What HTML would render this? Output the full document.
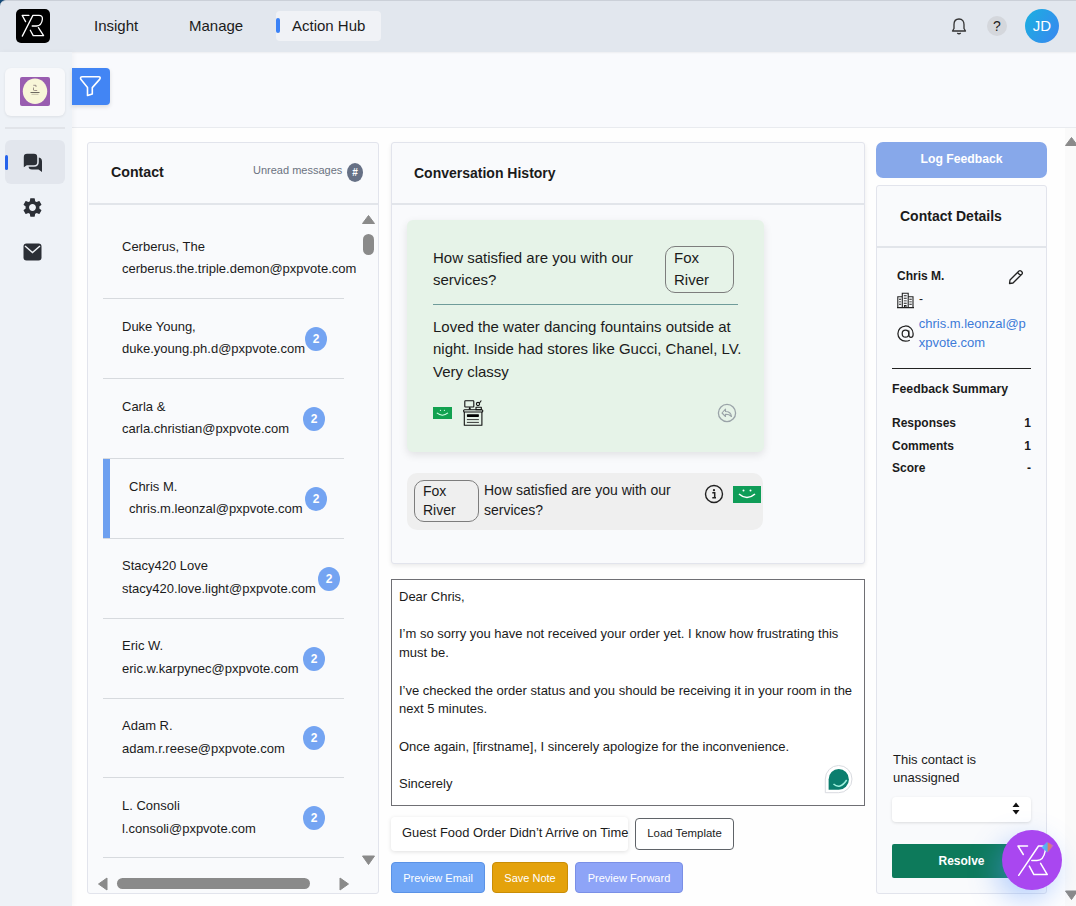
<!DOCTYPE html>
<html><head><meta charset="utf-8">
<style>
*{box-sizing:border-box;margin:0;padding:0}
html,body{width:1076px;height:906px;overflow:hidden}
body{position:relative;background:#f9fafd;font-family:"Liberation Sans",sans-serif;color:#1b1b1b}
.a{position:absolute}
.hdr{left:0;top:0;width:1076px;height:52px;background:#e3e7ee;border-top:1px solid #cdd2d9}
.corner{left:0;top:0;width:10px;height:10px;background:#174b78}
.hdrbg{left:0;top:0;width:1076px;height:52px;background:#e2e7ee;box-shadow:0 1px 2px rgba(0,0,0,.05);border-top-left-radius:6px;border-top:1px solid #cbd0d8}
.nav{font-size:15px;color:#1b1b1b;white-space:nowrap}
.side{left:0;top:52px;width:72px;height:854px;background:#eef2f7;box-shadow:2px 0 5px rgba(0,0,0,.035)}
.main{left:72px;top:127px;width:1004px;height:779px;background:#fefefe;border-top:1px solid #e9ebef}
.card{background:#f9fafc;border:1px solid #e2e4ec;border-radius:3px}
.cardhdr{border-bottom:2px solid #e2e5ea}
.bold{font-weight:700}
.t13{font-size:13px}
.sep{height:1px;background:#d7dade}
.badge{width:22px;height:24px;border-radius:50%;background:#74a4f2;color:#fff;font-weight:700;font-size:12px;text-align:center;line-height:24px}
.item{left:122px;width:240px;white-space:nowrap;font-size:13px;color:#222}
.citem{display:flex;align-items:center;height:80px;font-size:13px;color:#222;white-space:nowrap}
.ctext{line-height:22.6px;font-size:13px;color:#1b1b1b;white-space:nowrap}
.ctext div{height:22.6px}
.btn{color:#fff;font-size:11px;text-align:center;border-radius:4px;padding-top:1px}
</style></head><body>
<!-- header -->
<div class="a corner"></div>
<div class="a hdrbg"></div>
<div class="a" style="left:16px;top:9px;width:34px;height:34px;background:#000;border-radius:5px">
  <svg width="34" height="34" viewBox="0 0 34 34"><g fill="none" stroke="#fff" stroke-width="1.3" stroke-linejoin="round" stroke-linecap="round"><path d="M12.9 6.4 H6.2 L9.6 12.6"/><path d="M6.3 27.1 L16.9 6.4 H23 Q26.8 6.4 26.4 10.2 Q25.6 16.8 20.5 17 H16.2"/><path d="M14.3 21.2 L17.2 26.6 H27.6 L22.4 18.6"/></g></svg>
</div>
<div class="a nav" style="left:94px;top:17px">Insight</div>
<div class="a nav" style="left:189px;top:17px">Manage</div>
<div class="a" style="left:276px;top:11px;width:105px;height:30px;background:#f0f2f6;border-radius:4px"></div>
<div class="a" style="left:276px;top:18px;width:4px;height:15px;background:#3b82f6;border-radius:2px"></div>
<div class="a nav" style="left:292px;top:17px">Action Hub</div>
<!-- bell -->
<svg class="a" style="left:950px;top:17px" width="18" height="19" viewBox="0 0 18 19"><path d="M9 2 C5.5 2 4 4.5 4 7.5 V11.5 L2.5 14 H15.5 L14 11.5 V7.5 C14 4.5 12.5 2 9 2 Z" fill="none" stroke="#333" stroke-width="1.3" stroke-linejoin="round"/><path d="M7.3 16 Q9 17.6 10.7 16" fill="none" stroke="#333" stroke-width="1.3"/></svg>
<div class="a" style="left:987px;top:16px;width:20px;height:20px;border-radius:50%;background:#d4d7dc;color:#222;font-size:14px;text-align:center;line-height:20px">?</div>
<div class="a" style="left:1025px;top:9px;width:34px;height:34px;border-radius:50%;background:linear-gradient(120deg,#1ab0e0,#3a86f0);color:#fff;font-size:15px;text-align:center;line-height:34px">JD</div>

<!-- sidebar -->
<div class="a main"></div>
<div class="a side"></div>
<div class="a" style="left:72px;top:68px;width:38px;height:37px;background:#4285f4;border-radius:0 4px 4px 0;box-shadow:0 2px 4px rgba(0,0,0,.12)">
  <svg width="38" height="37" viewBox="0 0 38 37"><path d="M10.3 8.7 H26.6 Q29.2 8.8 27.6 11.4 L20.3 19.6 V26 L15.5 27.5 V19.6 L9 11.6 Q7.6 8.8 10.3 8.7 Z" fill="none" stroke="#fff" stroke-width="1.6" stroke-linejoin="round"/></svg>
</div>
<div class="a" style="left:5px;top:68px;width:60px;height:48px;background:#f8f9fb;border-radius:6px;box-shadow:0 1px 3px rgba(0,0,0,.08)"></div>
<svg class="a" style="left:20px;top:77px" width="30" height="29" viewBox="0 0 30 29"><rect width="30" height="29" rx="2" fill="#995db0"/><ellipse cx="15" cy="14.2" rx="12.2" ry="12.7" fill="#f8f6d8"/><path d="M13.3 8.3 H16 V10 M13.5 10.5 V12 Q13 13.5 14.5 13.5 H17.2" fill="none" stroke="#7a6a6a" stroke-width=".7"/><path d="M10.5 15.5 H19.5" stroke="#6e6a60" stroke-width="1"/><path d="M11.5 17.3 H18.5" stroke="#a09a88" stroke-width=".6"/></svg>
<div class="a" style="left:5px;top:127px;width:60px;height:2px;background:#e1e4e9"></div>
<div class="a" style="left:5px;top:140px;width:60px;height:44px;background:#e2e6ed;border-radius:6px"></div>
<div class="a" style="left:5px;top:155px;width:3px;height:15px;background:#2563eb;border-radius:2px"></div>
<!-- chat icon -->
<svg class="a" style="left:22px;top:152px" width="21" height="21" viewBox="0 0 21 21"><path d="M10 5.5 H16 Q20 5.5 20 9.5 V20 L16.5 17.5 H10 Q6.5 17.5 6.5 14 V9.5 Q6.5 5.5 10 5.5 Z" fill="#2b2f36"/><path d="M5 1 H12 Q16 1 16 5 V10 Q16 14 12 14 H5 L1 17 V5 Q1 1 5 1 Z" fill="#2b2f36" stroke="#e2e6ed" stroke-width="1.6"/></svg>
<!-- gear -->
<svg class="a" style="left:21px;top:196px" width="23" height="23" viewBox="0 0 24 24"><path fill="#2b2f36" d="M19.14 12.94c.04-.3.06-.61.06-.94 0-.32-.02-.64-.07-.94l2.03-1.58a.49.49 0 0 0 .12-.61l-1.92-3.32a.488.488 0 0 0-.59-.22l-2.39.96c-.5-.38-1.03-.7-1.62-.94l-.36-2.54a.484.484 0 0 0-.48-.41h-3.84c-.24 0-.43.17-.47.41l-.36 2.54c-.59.24-1.13.57-1.62.94l-2.39-.96c-.22-.08-.47 0-.59.22L2.74 8.87c-.12.21-.08.47.12.61l2.03 1.58c-.05.3-.09.63-.09.94s.02.64.07.94l-2.03 1.58a.49.49 0 0 0-.12.61l1.92 3.32c.12.22.37.29.59.22l2.39-.96c.5.38 1.03.7 1.62.94l.36 2.54c.05.24.24.41.48.41h3.84c.24 0 .44-.17.47-.41l.36-2.54c.59-.24 1.13-.56 1.62-.94l2.39.96c.22.08.47 0 .59-.22l1.92-3.32c.12-.22.07-.47-.12-.61l-2.01-1.58zM12 15.6c-1.98 0-3.6-1.62-3.6-3.6s1.62-3.6 3.6-3.6 3.6 1.62 3.6 3.6-1.62 3.6-3.6 3.6z"/></svg>
<!-- envelope -->
<svg class="a" style="left:23px;top:243px" width="19" height="18" viewBox="0 0 19 18"><rect x="0.5" y="0.5" width="18" height="17" rx="3" fill="#2b2f36"/><path d="M2 3 L9.5 9.5 L17 3" fill="none" stroke="#eff2f6" stroke-width="1.5"/></svg>

<!-- contact card -->
<div class="a card" style="left:87px;top:142px;width:292px;height:752px"></div>
<div class="a" style="left:89px;top:203px;width:289px;height:2px;background:#e2e5ea"></div>
<div class="a bold" style="left:111px;top:164px;font-size:14.2px">Contact</div>
<div class="a" style="left:253px;top:164px;font-size:11px;color:#6b7280">Unread messages</div>
<div class="a" style="left:347px;top:163px;width:16px;height:19px;border-radius:50%;background:#667085;color:#fff;font-size:10px;font-weight:700;text-align:center;line-height:19px">#</div>

<!-- contact list -->
<div class="a" style="left:89px;top:205px;width:273px;height:688px;overflow:hidden">
<div class="a ctext" style="left:33px;top:30.90px"><div>Cerberus, The</div><div>cerberus.the.triple.demon@pxpvote.com</div></div>
<div class="a ctext" style="left:33px;top:110.78px"><div>Duke Young,</div><div>duke.young.ph.d@pxpvote.com</div></div>
<div class="a badge" style="left:216px;top:122.00px">2</div>
<div class="a ctext" style="left:33px;top:190.66px"><div>Carla &</div><div>carla.christian@pxpvote.com</div></div>
<div class="a badge" style="left:214px;top:201.88px">2</div>
<div class="a" style="left:14px;top:253.36px;width:7px;height:79.88px;background:#6ea0f0"></div>
<div class="a ctext" style="left:40px;top:270.54px"><div>Chris M.</div><div>chris.m.leonzal@pxpvote.com</div></div>
<div class="a badge" style="left:216px;top:281.76px">2</div>
<div class="a ctext" style="left:33px;top:350.42px"><div>Stacy420 Love</div><div>stacy420.love.light@pxpvote.com</div></div>
<div class="a badge" style="left:229px;top:361.64px">2</div>
<div class="a ctext" style="left:33px;top:430.30px"><div>Eric W.</div><div>eric.w.karpynec@pxpvote.com</div></div>
<div class="a badge" style="left:214px;top:441.52px">2</div>
<div class="a ctext" style="left:33px;top:510.18px"><div>Adam R.</div><div>adam.r.reese@pxpvote.com</div></div>
<div class="a badge" style="left:214px;top:521.40px">2</div>
<div class="a ctext" style="left:33px;top:590.06px"><div>L. Consoli</div><div>l.consoli@pxpvote.com</div></div>
<div class="a badge" style="left:214px;top:601.28px">2</div>
<div class="a sep" style="left:14px;top:93.10px;width:241px"></div>
<div class="a sep" style="left:14px;top:172.98px;width:241px"></div>
<div class="a sep" style="left:14px;top:252.86px;width:241px"></div>
<div class="a sep" style="left:14px;top:332.74px;width:241px"></div>
<div class="a sep" style="left:14px;top:412.62px;width:241px"></div>
<div class="a sep" style="left:14px;top:492.50px;width:241px"></div>
<div class="a sep" style="left:14px;top:572.38px;width:241px"></div>
<div class="a sep" style="left:14px;top:652.26px;width:241px"></div>
</div>
<!-- scrollbars -->
<svg class="a" style="left:362px;top:214px" width="13" height="11"><path d="M6.5 1.5 L12.5 9.5 H0.5 Z" fill="#8a8a8a" stroke="#8a8a8a" stroke-width="1" stroke-linejoin="round"/></svg>
<div class="a" style="left:363px;top:234px;width:11px;height:21px;border-radius:5.5px;background:#8a8a8a"></div>
<svg class="a" style="left:362px;top:855px" width="13" height="11"><path d="M0.5 1 H12.5 L6.5 9.5 Z" fill="#8a8a8a" stroke="#8a8a8a" stroke-width="1" stroke-linejoin="round"/></svg>
<svg class="a" style="left:97px;top:877px" width="11" height="14"><path d="M10 1 V13 L1.5 7 Z" fill="#8a8a8a" stroke="#8a8a8a" stroke-width="1" stroke-linejoin="round"/></svg>
<div class="a" style="left:117px;top:878px;width:193px;height:11px;border-radius:5.5px;background:#8a8a8a"></div>
<svg class="a" style="left:339px;top:877px" width="11" height="14"><path d="M1 1 V13 L9.5 7 Z" fill="#8a8a8a" stroke="#8a8a8a" stroke-width="1" stroke-linejoin="round"/></svg>
<!-- conversation card -->
<div class="a card" style="left:391px;top:142px;width:474px;height:422px;box-shadow:0 2px 4px rgba(0,0,0,.08)"></div>
<div class="a" style="left:392px;top:203px;width:472px;height:2px;background:#e2e5ea"></div>
<div class="a bold" style="left:414px;top:165px;font-size:14px">Conversation History</div>
<div class="a" style="left:407px;top:220px;width:357px;height:232px;background:#e6f3e8;border-radius:6px;box-shadow:0 3px 8px rgba(0,0,0,.10)"></div>
<div class="a" style="left:433px;top:246.8px;width:215px;font-size:15px;line-height:22px;color:#1b1b1b">How satisfied are you with our services?</div>
<div class="a" style="left:665px;top:246px;width:69px;height:47px;border:1px solid #7d7d7d;border-radius:10px"></div>
<div class="a" style="left:674px;top:246.8px;font-size:15px;line-height:22px;color:#1b1b1b">Fox<br>River</div>
<div class="a" style="left:433px;top:304px;width:305px;height:1px;background:#6f9c9a"></div>
<div class="a" style="left:433px;top:315.9px;width:310px;font-size:15px;line-height:22.4px;color:#1b1b1b">Loved the water dancing fountains outside at night. Inside had stores like Gucci, Chanel, LV. Very classy</div>
<!-- smiley -->
<svg class="a" style="left:433px;top:407px" width="19" height="12" viewBox="0 0 19 12"><rect width="19" height="12" fill="#12a150"/><path d="M3.8 5.9 Q9.4 10.5 15 5.9" fill="none" stroke="#d8ffe8" stroke-width="1.1"/><circle cx="7.5" cy="3.3" r=".65" fill="#d8ffe8"/><circle cx="11.4" cy="3.3" r=".65" fill="#d8ffe8"/></svg>
<!-- desk icon -->
<svg class="a" style="left:463px;top:399px" width="21" height="28" viewBox="0 0 21 28"><g fill="none" stroke="#111" stroke-width="1.1" stroke-linejoin="round"><rect x="1.8" y="1.8" width="9" height="6.2" rx=".6"/><path d="M1.3 13 V26.3 H18.9 V13"/><rect x="0.6" y="10.8" width="19.2" height="2.2" rx="1"/><rect x="13" y="8.3" width="5.3" height="2.5"/><circle cx="15" cy="5" r="1.6"/><path d="M16.5 4 L18.3 1.5"/></g><path d="M6.3 8 L5.5 10.5 H8 L7.2 8 Z" fill="#111"/><rect x="3.9" y="15.2" width="12" height="2.7" rx=".6" fill="#000"/><path d="M3.9 20.6 H15.9 M3.9 23.4 H15.9" stroke="#222" stroke-width=".9"/></svg>
<!-- reply icon -->
<svg class="a" style="left:717px;top:403px" width="20" height="20" viewBox="0 0 20 20"><circle cx="10" cy="10" r="8.6" fill="none" stroke="#9aa3a8" stroke-width="1.3"/><path d="M8.5 6 L5 10 L8.5 13.5 V11.2 Q12 11 14.5 13.5 Q13.8 8.5 8.5 8.5 Z" fill="none" stroke="#9aa3a8" stroke-width="1.1" stroke-linejoin="round"/></svg>
<!-- gray bubble -->
<div class="a" style="left:407px;top:473px;width:356px;height:57px;background:#efefef;border-radius:10px"></div>
<div class="a" style="left:414px;top:480px;width:65px;height:42px;border:1px solid #7d7d7d;border-radius:10px"></div>
<div class="a" style="left:423px;top:481.8px;font-size:14px;line-height:19.5px;color:#1b1b1b">Fox<br>River</div>
<div class="a" style="left:484px;top:480px;width:205px;font-size:14px;line-height:20px;color:#1b1b1b">How satisfied are you with our services?</div>
<svg class="a" style="left:704px;top:484px" width="20" height="20" viewBox="0 0 20 20"><circle cx="10" cy="10" r="8.5" fill="none" stroke="#222" stroke-width="1.4"/><circle cx="10" cy="6.2" r="1.1" fill="#222"/><path d="M8.3 8.8 H10.7 V13.6 M8.3 13.8 H12" fill="none" stroke="#222" stroke-width="1.5"/></svg>
<svg class="a" style="left:733px;top:486px" width="28" height="17" viewBox="0 0 28 17"><rect width="28" height="17" fill="#0f9d58"/><path d="M6 8 Q14 15 22 8" fill="none" stroke="#fff" stroke-width="1.6"/><circle cx="10.5" cy="4.5" r="1" fill="#fff"/><circle cx="17.5" cy="4.5" r="1" fill="#fff"/></svg>
<!-- textarea -->
<div class="a" style="left:391px;top:579px;width:474px;height:227px;background:#fff;border:1px solid #6f6f74"></div>
<div class="a" style="left:399px;top:588px;width:462px;font-size:13px;line-height:18.7px;color:#1b1b1b;white-space:nowrap">Dear Chris,<br><br>I’m so sorry you have not received your order yet. I know how frustrating this<br>must be.<br><br>I’ve checked the order status and you should be receiving it in your room in the<br>next 5 minutes.<br><br>Once again, [firstname], I sincerely apologize for the inconvenience.<br><br>Sincerely</div>
<svg class="a" style="left:824px;top:765px" width="30" height="30" viewBox="0 0 30 30"><path d="M1.3 27.7 V14.1 A13.35 13.6 0 1 1 14.65 27.7 Z" fill="#fff" stroke="#d9dbe0" stroke-width="1"/><path d="M4.6 24.8 V14.4 A10.15 10.4 0 1 1 14.75 24.8 Z" fill="#0b7e6e"/><path d="M9.5 19 Q16 25 22.7 15" fill="none" stroke="#9ff0dd" stroke-width="1.5"/></svg>
<!-- template row -->
<div class="a" style="left:391px;top:817px;width:237px;height:34px;background:#fff;border-radius:4px;box-shadow:0 1px 4px rgba(0,0,0,.12)"></div>
<div class="a" style="left:402px;top:825px;font-size:12.9px;color:#1b1b1b;white-space:nowrap">Guest Food Order Didn’t Arrive on Time</div>
<div class="a" style="left:635px;top:818px;width:99px;height:32px;background:#fff;border:1px solid #5f6368;border-radius:4px;font-size:11.4px;line-height:28px;text-align:center;color:#1b1b1b">Load Template</div>
<div class="a btn" style="left:391px;top:862px;width:94px;height:31px;background:#70a6f6;border:1px solid #5a92e6;line-height:29px">Preview Email</div>
<div class="a btn" style="left:492px;top:862px;width:76px;height:31px;background:#e4a20c;border:1px solid #c98d06;line-height:29px">Save Note</div>
<div class="a btn" style="left:575px;top:862px;width:108px;height:31px;background:#8ea4f7;border:1px solid #7a8fe6;line-height:29px">Preview Forward</div>

<!-- right panel -->
<div class="a bold" style="left:876px;top:142px;width:171px;height:36px;background:#87a8ea;border-radius:7px;color:#fff;font-size:12.2px;line-height:34px;text-align:center">Log Feedback</div>
<div class="a card" style="left:876px;top:185px;width:171px;height:709px"></div>
<div class="a" style="left:877px;top:246px;width:169px;height:2px;background:#e2e5ea"></div>
<div class="a bold" style="left:900px;top:208px;font-size:14px">Contact Details</div>
<div class="a bold" style="left:897px;top:269px;font-size:12px">Chris M.</div>
<svg class="a" style="left:1007px;top:269px" width="17" height="17" viewBox="0 0 17 17"><path d="M2.5 14.5 L3 11 L12 2 Q13 1.2 14 2 L15 3 Q15.8 4 15 5 L6 14 Z M10.5 3.5 L13.5 6.5" fill="none" stroke="#222" stroke-width="1.3" stroke-linejoin="round"/></svg>
<svg class="a" style="left:896px;top:291px" width="19" height="18" viewBox="0 0 19 18"><g fill="none" stroke="#222" stroke-width="1.1"><path d="M6.3 16.5 V2.2 H12.2 V16.5 M6.3 5.8 H1.8 V16.5 M12.2 5.8 H17 V16.5 M1 16.6 H18"/><path d="M7.8 4.8 H10.7 M7.8 7.3 H10.7 M7.8 12.3 H10.7 M3 8.3 H5.2 M3 13.3 H5.2 M13.3 8.3 H15.8 M13.3 13.3 H15.8 M8.5 16.5 V14.5 H10 V16.5"/></g><path d="M7.8 9.8 H10.7 M3 10.8 H5.2 M13.3 10.8 H15.8" stroke="#888" stroke-width="1.4"/></svg>
<div class="a" style="left:919px;top:292px;font-size:12px">-</div>
<svg class="a" style="left:897px;top:325px" width="17" height="17" viewBox="0 0 17 17"><g fill="none" stroke="#222" stroke-width="1.25"><path d="M12.8 15.3 Q11 16.2 8.5 16.2 A7.6 7.6 0 1 1 16.1 8.5 V9.8 Q16.1 12.3 14 12.3 Q11.8 12.3 11.8 9.8 V5.5"/><ellipse cx="8.5" cy="8.7" rx="3.3" ry="3.5"/></g></svg>
<div class="a" style="left:918.7px;top:315px;width:110px;font-size:13px;line-height:18.6px;color:#3d7bd8;word-break:break-all">chris.m.leonzal@pxpvote.com</div>
<div class="a" style="left:892px;top:368px;width:139px;height:1px;background:#222"></div>
<div class="a bold" style="left:892px;top:382px;font-size:12.3px">Feedback Summary</div>
<div class="a" style="left:892px;top:412px;width:139px;font-size:12px;font-weight:700;line-height:22.5px;color:#1b1b1b"><div style="display:flex;justify-content:space-between"><span>Responses</span><span>1</span></div><div style="display:flex;justify-content:space-between"><span>Comments</span><span>1</span></div><div style="display:flex;justify-content:space-between"><span>Score</span><span>-</span></div></div>
<div class="a" style="left:893px;top:751px;font-size:13px;line-height:18px;color:#1b1b1b">This contact is<br>unassigned</div>
<div class="a" style="left:892px;top:797px;width:139px;height:25px;background:#fff;border-radius:4px;box-shadow:0 1px 3px rgba(0,0,0,.12)"></div>
<svg class="a" style="left:1012px;top:802px" width="8" height="13" viewBox="0 0 8 13"><path d="M4 0.5 L7.5 5 H0.5 Z M0.5 8 H7.5 L4 12.5 Z" fill="#111"/></svg>
<div class="a bold" style="left:892px;top:844px;width:139px;height:34px;background:#0d7a5b;border-radius:2px;color:#fff;font-size:12px;line-height:34px;text-align:center">Resolve</div>
<!-- page scrollbar -->
<div class="a" style="left:1065px;top:128px;width:11px;height:778px;background:#fafafa"></div>
<svg class="a" style="left:1065px;top:136px" width="13" height="11"><path d="M6.5 1.5 L12.5 9.5 H0.5 Z" fill="#8a8a8a" stroke="#8a8a8a" stroke-linejoin="round"/></svg>
<svg class="a" style="left:1065px;top:890px" width="13" height="11"><path d="M0.5 1 H12.5 L6.5 9.5 Z" fill="#8a8a8a" stroke="#8a8a8a" stroke-linejoin="round"/></svg>
<!-- FAB -->
<div class="a" style="left:1002px;top:830px;width:60px;height:60px;border-radius:50%;background:#a947f0;box-shadow:-6px 10px 28px rgba(90,150,255,.42)">
<svg width="60" height="60" viewBox="0 0 60 60"><g fill="none" stroke="#fff" stroke-width="1.5" stroke-linejoin="round" stroke-linecap="round"><path d="M25.5 16 H16 L21.3 24.5"/><path d="M16.7 45.3 L36.5 16 H40 Q44 16 43.2 21 Q41.5 30.5 35 30.5 H29.8"/><path d="M27.3 36.1 L31.9 44.6 H45.3 L38.6 33.3"/></g><defs><linearGradient id="gem" x1="0" y1="0" x2="1" y2="0"><stop offset="0" stop-color="#4fc3f7"/><stop offset=".45" stop-color="#5aa9f0"/><stop offset=".6" stop-color="#e87a5a"/><stop offset="1" stop-color="#b070d8"/></linearGradient></defs><path d="M39.5 17.5 L45 12 L51.5 15.5 L45.5 22.5 Z" fill="url(#gem)"/></svg>
</div>
</body></html>
